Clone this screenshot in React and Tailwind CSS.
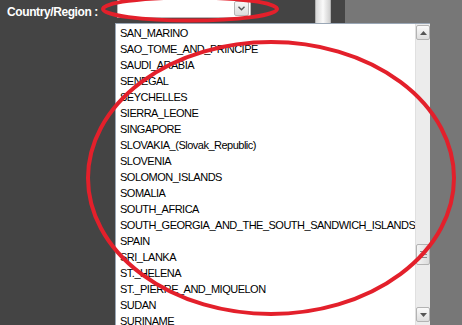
import React from "react";

const countries = [
  "SAN_MARINO",
  "SAO_TOME_AND_PRINCIPE",
  "SAUDI_ARABIA",
  "SENEGAL",
  "SEYCHELLES",
  "SIERRA_LEONE",
  "SINGAPORE",
  "SLOVAKIA_(Slovak_Republic)",
  "SLOVENIA",
  "SOLOMON_ISLANDS",
  "SOMALIA",
  "SOUTH_AFRICA",
  "SOUTH_GEORGIA_AND_THE_SOUTH_SANDWICH_ISLANDS",
  "SPAIN",
  "SRI_LANKA",
  "ST._HELENA",
  "ST._PIERRE_AND_MIQUELON",
  "SUDAN",
  "SURINAME",
  "SWAZILAND",
];

export default function App() {
  return (
    <div
      className="relative w-[462px] h-[325px] overflow-hidden bg-[#444444] flex"
      style={{ fontFamily: '"Liberation Sans", Arial, sans-serif' }}
    >
      {/* left dark area with label and select */}
      <div className="w-[315px] h-full flex items-start">
        <div className="flex items-start h-[19px] pl-[7px]">
          <span className="text-white font-bold text-[12px] tracking-[-0.4px] w-[110px] leading-none pt-[6px]">
            Country/Region :
          </span>
          <div className="w-[134px] h-[18px] bg-white border border-[#b8b8b8] border-t-0 flex justify-end items-center pr-[1px]">
            <div className="w-[15px] h-[15px] border border-[#b5b5b5] rounded-[2px] bg-gradient-to-b from-[#f7f7f7] to-[#dcdcdc] flex items-center justify-center">
              <svg width="7" height="5" viewBox="0 0 7 5">
                <path d="M0.5 0.8 L3.5 3.8 L6.5 0.8" fill="none" stroke="#555" strokeWidth="1.4" />
              </svg>
            </div>
          </div>
        </div>
      </div>
      {/* light vertical strip */}
      <div className="w-[16px] h-[24px] border-x border-[#b0b0b0] bg-gradient-to-r from-[#d8d8d8] via-[#fafafa] to-[#cfcfcf]" />
      <div className="w-[14px] h-full bg-[#454545]" />
      <div className="flex-1 h-full bg-[#777777]" />

      {/* dropdown list */}
      <div className="absolute left-[115px] top-[23px] w-[315px] h-[310px] bg-white border border-[#9aa7b6] flex">
        <ul
          className="flex-1 pl-[4px] pt-[1px] text-[11px] tracking-[-0.5px] text-black"
          style={{ fontFamily: '"Liberation Sans", Arial, sans-serif' }}
        >
          {countries.map((c) => (
            <li key={c} className="h-[16px] leading-[16px] whitespace-nowrap">
              {c}
            </li>
          ))}
        </ul>
        <div className="w-[16px] h-full bg-[#ececec] border-l border-[#e0e0e0] flex flex-col items-center pt-[1px]">
          <div className="w-[14px] h-[15px] border border-[#b3b3b3] rounded-[2px] bg-gradient-to-b from-[#fafafa] to-[#dedede] flex items-center justify-center">
            <svg width="7" height="4" viewBox="0 0 7 4">
              <path d="M0 4 L3.5 0 L7 4 Z" fill="#555" />
            </svg>
          </div>
          <div className="h-[204px]" />
          <div className="w-[14px] h-[21px] border border-[#b3b3b3] rounded-[2px] bg-gradient-to-r from-[#f5f5f5] to-[#dcdcdc] flex flex-col items-center justify-center gap-[2px]">
            <div className="w-[7px] h-px bg-[#8a8a8a]" />
            <div className="w-[7px] h-px bg-[#8a8a8a]" />
            <div className="w-[7px] h-px bg-[#8a8a8a]" />
          </div>
          <div className="h-[42px]" />
          <div className="w-[14px] h-[15px] border border-[#b3b3b3] rounded-[2px] bg-gradient-to-b from-[#fafafa] to-[#dedede] flex items-center justify-center">
            <svg width="7" height="4" viewBox="0 0 7 4">
              <path d="M0 0 L3.5 4 L7 0 Z" fill="#555" />
            </svg>
          </div>
        </div>
      </div>

      {/* red annotation ellipses */}
      <svg className="absolute left-0 top-0 pointer-events-none" width="462" height="325" viewBox="0 0 462 325">
        <ellipse cx="190" cy="9" rx="87" ry="11.5" fill="none" stroke="#e3202b" strokeWidth="4" />
        <ellipse cx="271" cy="178" rx="183" ry="136" fill="none" stroke="#e3202b" strokeWidth="4" />
      </svg>
    </div>
  );
}
